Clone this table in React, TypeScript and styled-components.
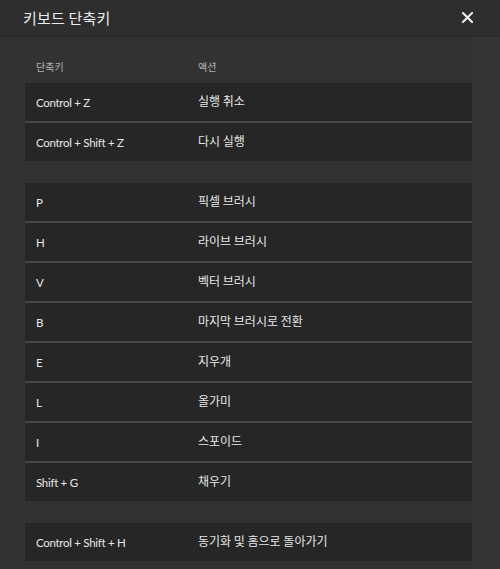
import styled, { createGlobalStyle } from "styled-components";

const Global = createGlobalStyle`
  html, body { margin: 0; padding: 0; background: #323232; }
  body { font-family: "Noto Sans", "Noto Sans CJK KR", sans-serif; }
`;

const Dialog = styled.div`
  width: 500px;
  height: 569px;
  display: flex;
  flex-direction: column;
  background: #323232;
  overflow: hidden;
`;

const Header = styled.div`
  height: 35px;
  flex: 0 0 35px;
  display: flex;
  align-items: center;
  justify-content: space-between;
  padding: 0 27px 0 23px;
  background: #2e2e2e;
  border-bottom: 2px solid #2a2a2a;
`;

const Title = styled.h1`
  margin: 0;
  font-family: "Noto Sans CJK KR", sans-serif;
  font-size: 15px;
  font-weight: 400;
  color: #ececec;
  letter-spacing: 0.2px;
`;

const Close = styled.button`
  border: 0;
  background: none;
  padding: 0;
  width: 12px;
  height: 12px;
  display: flex;
  align-items: center;
  justify-content: center;
  cursor: pointer;
`;

const Body = styled.div`
  flex: 1;
  display: flex;
`;

const Content = styled.div`
  width: 447px;
  padding: 13px 0 0 25px;
`;

const Track = styled.div`
  flex: 1;
  background: #353535;
`;

const ColHead = styled.div`
  height: 33px;
  display: grid;
  grid-template-columns: 162px 1fr;
  align-items: center;
  padding-left: 11px;
  font-family: "Noto Sans CJK KR", sans-serif;
  font-size: 10px;
  color: #b4b4b4;
`;

const Group = styled.div`
  background: #262626;
  & + & {
    margin-top: 22px;
  }
`;

const Row = styled.div`
  height: 38px;
  display: grid;
  grid-template-columns: 162px 1fr;
  align-items: center;
  padding-left: 11px;
  & + & {
    border-top: 2px solid #474747;
  }
`;

const Keys = styled.span`
  font-family: Lato, "Noto Sans", sans-serif;
  font-size: 11.5px;
  letter-spacing: -0.3px;
  color: #e6e6e6;
`;

const Action = styled.span`
  font-family: "Noto Sans CJK KR", sans-serif;
  font-size: 12px;
  color: #e6e6e6;
  margin-top: -3px;
`;

const groups: [string, string][][] = [
  [
    ["Control + Z", "실행 취소"],
    ["Control + Shift + Z", "다시 실행"],
  ],
  [
    ["P", "픽셀 브러시"],
    ["H", "라이브 브러시"],
    ["V", "벡터 브러시"],
    ["B", "마지막 브러시로 전환"],
    ["E", "지우개"],
    ["L", "올가미"],
    ["I", "스포이드"],
    ["Shift + G", "채우기"],
  ],
  [["Control + Shift + H", "동기화 및 홈으로 돌아가기"]],
];

export default function App() {
  return (
    <Dialog>
      <Global />
      <Header>
        <Title>키보드 단축키</Title>
        <Close aria-label="닫기">
          <svg width="11" height="11" viewBox="0 0 11 11">
            <path d="M1 1 L10 10 M10 1 L1 10" stroke="#f2f2f2" strokeWidth="2" strokeLinecap="square" />
          </svg>
        </Close>
      </Header>
      <Body>
        <Content>
          <ColHead>
            <span>단축키</span>
            <span>액션</span>
          </ColHead>
          {groups.map((g, i) => (
            <Group key={i}>
              {g.map(([k, a]) => (
                <Row key={k}>
                  <Keys>{k}</Keys>
                  <Action>{a}</Action>
                </Row>
              ))}
            </Group>
          ))}
        </Content>
        <Track />
      </Body>
    </Dialog>
  );
}
